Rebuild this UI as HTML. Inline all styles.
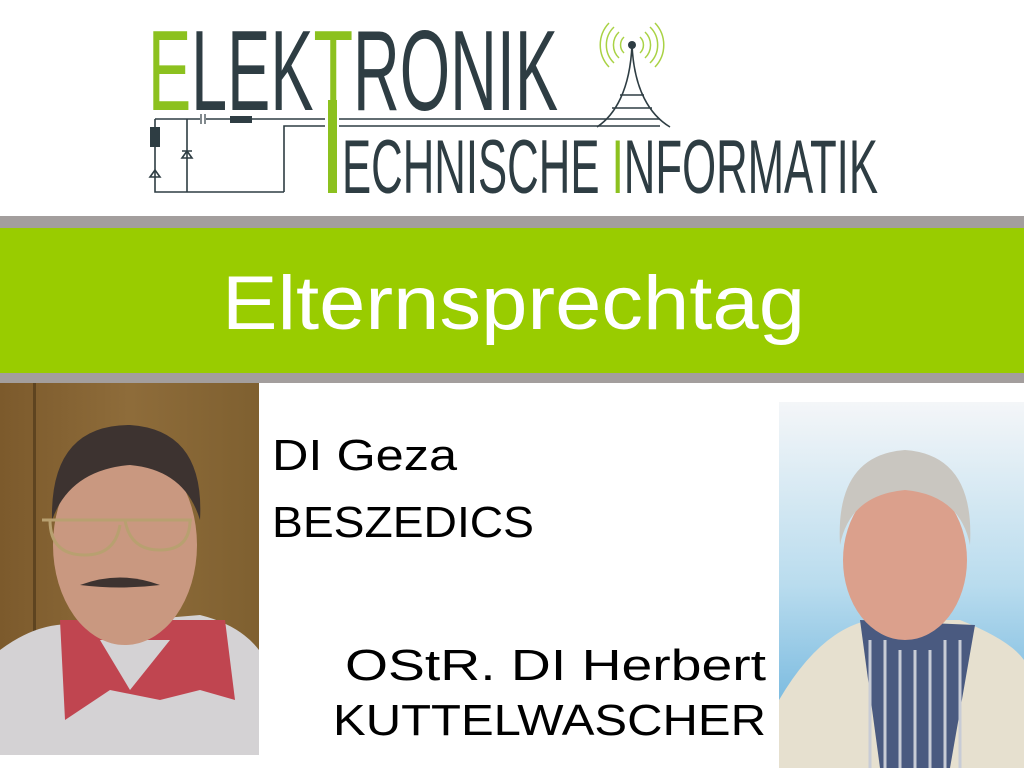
<!DOCTYPE html>
<html><head><meta charset="utf-8"><style>
html,body{margin:0;padding:0;background:#fff;width:1024px;height:768px;overflow:hidden}
svg{display:block}
</style></head><body>
<svg width="1024" height="768" viewBox="0 0 1024 768" xmlns="http://www.w3.org/2000/svg">
<rect width="1024" height="768" fill="#fff"/>
<g stroke="#2e3d43" stroke-width="1.6" fill="none">
<path d="M155 119 H660"/><path d="M284 192 V126 H660"/>
<path d="M155 119 V192 H284"/><path d="M187 119 V192"/>
<path d="M182 158 h10 l-5 -7z M182 151 h10"/>
<path d="M150 177 h10 l-5 -7z"/>
<path d="M632 45 C630 90 615 115 597 127 M632 45 C634 90 650 115 670 127 M620 95 h24 M612 108 h40"/>
</g>
<rect x="150" y="127" width="10" height="20" fill="#2e3d43"/>
<rect x="230" y="116" width="22" height="7" fill="#2e3d43"/>
<rect x="200" y="114" width="6" height="10" fill="#fff"/><path d="M201 114v10M205 114v10" stroke="#2e3d43" stroke-width="1.2"/>
<circle cx="632" cy="45" r="4" fill="#2e3d43"/>
<g stroke="#a9d244" stroke-width="1.5" fill="none">
<path d="M624 37 a11 11 0 0 0 0 16 M640 37 a11 11 0 0 1 0 16"/>
<path d="M619 32 a18 18 0 0 0 0 26 M645 32 a18 18 0 0 1 0 26"/>
<path d="M614 27 a25 25 0 0 0 0 36 M650 27 a25 25 0 0 1 0 36"/>
<path d="M609 23 a32 32 0 0 0 0 44 M655 23 a32 32 0 0 1 0 44"/>
</g>
<rect x="325" y="100" width="14" height="93" fill="#fff"/>
<g font-family="Liberation Sans Narrow, Liberation Sans, sans-serif">
<text x="148" y="110" font-size="114" textLength="410" lengthAdjust="spacingAndGlyphs" fill="#2e3d43"><tspan fill="#8cc11f">E</tspan>LEK<tspan fill="#8cc11f">T</tspan>RONIK</text>
<text x="342" y="193" font-size="76" textLength="536" lengthAdjust="spacingAndGlyphs" fill="#2e3d43">ECHNISCHE <tspan fill="#8cc11f">I</tspan>NFORMATIK</text>
</g>
<rect x="328" y="100" width="9" height="93" fill="#8cc11f"/>
<rect y="216" width="1024" height="12" fill="#a39e9d"/>
<rect y="228" width="1024" height="145" fill="#99cc00"/>
<rect y="373" width="1024" height="10" fill="#a39e9d"/>
<text x="222" y="329" font-family="Liberation Sans, sans-serif" font-size="76" fill="#fff" textLength="583" lengthAdjust="spacingAndGlyphs">Elternsprechtag</text>
<defs>
<linearGradient id="wood" x1="0" x2="1"><stop offset="0" stop-color="#7c5a2c"/><stop offset=".5" stop-color="#8e6c3a"/><stop offset="1" stop-color="#7f6030"/></linearGradient>
<linearGradient id="sky" x1="0" y1="0" x2="0" y2="1"><stop offset="0" stop-color="#f4f6f8"/><stop offset=".5" stop-color="#b9dcee"/><stop offset="1" stop-color="#5aa9d8"/></linearGradient>
</defs>
<rect x="0" y="383" width="259" height="372" fill="url(#wood)"/>
<rect x="33" y="383" width="3" height="372" fill="#5e4420"/>
<path d="M0 650 Q40 620 80 625 L200 615 Q240 625 259 650 V755 H0z" fill="#d4d2d4"/>
<path d="M60 620 L65 720 L110 690 L160 700 L200 690 L235 700 L225 620 Z" fill="#c04550"/>
<path d="M100 640 L130 690 L170 640 Z" fill="#d4d2d4"/>
<ellipse cx="125" cy="545" rx="72" ry="100" fill="#c99880"/>
<path d="M52 520 Q50 425 130 425 Q205 430 200 520 Q185 470 130 465 Q70 470 52 520z" fill="#3d3330"/>
<path d="M42 520 h150 M50 520 q0 35 35 35 q30 0 35 -30 M125 520 q5 30 35 30 q30 0 30 -30" stroke="#b8a070" stroke-width="3" fill="none"/>
<path d="M80 585 q40 -15 80 0 q-40 5 -80 0z" fill="#3d3330"/>
<rect x="779" y="402" width="245" height="366" fill="url(#sky)"/>
<path d="M779 700 Q820 630 870 620 L960 620 Q1010 640 1024 660 V768 H779z" fill="#e6e0cf"/>
<path d="M860 620 L880 768 H950 L975 625 Z" fill="#4a5a80"/>
<path d="M870 640 v128 M885 640 v128 M900 650 v118 M915 650 v118 M930 650 v118 M945 640 v128 M960 640 v128" stroke="#c8ccd6" stroke-width="3"/>
<ellipse cx="905" cy="560" rx="62" ry="80" fill="#dba08c"/>
<path d="M840 545 Q835 455 905 450 Q975 455 970 545 Q960 495 905 490 Q850 495 840 545z" fill="#c9c6c0"/>
<g font-family="Liberation Sans, sans-serif" font-size="44" fill="#000">
<text x="272" y="470" textLength="185" lengthAdjust="spacingAndGlyphs">DI Geza</text>
<text x="272" y="537" textLength="262" lengthAdjust="spacingAndGlyphs">BESZEDICS</text>
<text x="345" y="680" textLength="421" lengthAdjust="spacingAndGlyphs">OStR. DI Herbert</text>
<text x="333" y="735" textLength="433" lengthAdjust="spacingAndGlyphs">KUTTELWASCHER</text>
</g>
</svg>
</body></html>
